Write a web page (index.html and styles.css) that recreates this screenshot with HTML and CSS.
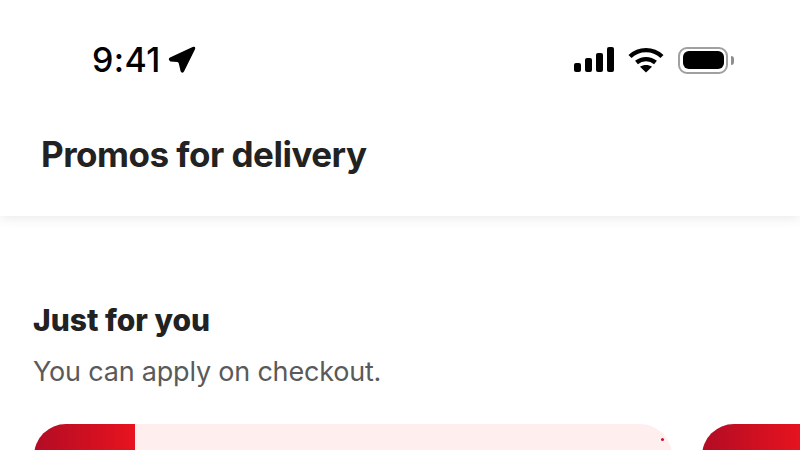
FILE: index.html
```html
<!DOCTYPE html>
<html lang="en">
<head>
    <meta charset="UTF-8">
    <title>Promos for delivery</title>
    <link rel="stylesheet" href="styles.css">
</head>
<body>
<header class="top">
    <div class="status">
        <div class="status-left">
            <span class="time">9:41</span>
            <svg class="arrow" width="28" height="28" viewBox="0 0 28 28"><path d="M2 11.6 L24.6 0.9 Q28 -0.2 27 3.2 L16 25.4 Q14 28 12.6 25.2 L10.8 17.4 Q10.5 16.2 9.4 16 L2.4 15.6 Q-0.6 13.4 2 11.6Z" fill="#000"/></svg>
        </div>
        <div class="status-right">
            <svg class="signal" width="40" height="26" viewBox="0 0 40 26">
                <rect x="0" y="16" width="7" height="9" rx="2"/>
                <rect x="11" y="11" width="7" height="14" rx="2"/>
                <rect x="22" y="6" width="7" height="19" rx="2"/>
                <rect x="33" y="0" width="7" height="25" rx="2"/>
            </svg>
            <svg class="wifi" width="36" height="26" viewBox="0 0 36 26" fill="none" stroke="#000" stroke-width="4.4">
                <path d="M2 9.5 C11 1 25 1 34 9.5"/>
                <path d="M8.5 15.5 C14 11 22 11 27.5 15.5"/>
                <path d="M18 25.5 L12 19.8 C15.5 17.3 20.5 17.3 24 19.8Z" fill="#000" stroke="none"/>
            </svg>
            <div class="battery">
                <div class="battery-shell"><div class="battery-fill"></div></div>
                <div class="battery-cap"></div>
            </div>
        </div>
    </div>
    <h1 class="title">Promos for delivery</h1>
</header>

<main class="content">
    <h2 class="section-title">Just for you</h2>
    <p class="section-sub">You can apply on checkout.</p>
    <div class="cards">
        <div class="card">
            <div class="card-side"></div>
            <div class="card-body"><span class="dot"></span></div>
        </div>
        <div class="card">
            <div class="card-side"></div>
            <div class="card-body"></div>
        </div>
    </div>
</main>
</body>
</html>
```

FILE: styles.css
```css
html, body {
    margin: 0;
    height: 100%;
    overflow: hidden;
    background: #fff;
}

body {
    font-family: Inter, "Liberation Sans", sans-serif;
    color: #222;
}

.top {
    height: 216px;
    box-sizing: border-box;
    padding-top: 38px;
    background: #fff;
    box-shadow: 0 1px 12px rgba(0, 0, 0, 0.1);
}

.status {
    display: flex;
    justify-content: space-between;
    align-items: center;
    height: 44px;
    padding: 0 66px 0 92px;
}

.status-left {
    display: flex;
    align-items: center;
    gap: 7px;
}

.time {
    font-size: 34px;
    font-weight: 500;
    line-height: 44px;
    letter-spacing: 0.4px;
    color: #000;
}

.status-right {
    display: flex;
    align-items: center;
    gap: 14px;
}

.battery {
    display: flex;
    align-items: center;
    gap: 3px;
}

.battery-shell {
    box-sizing: border-box;
    width: 50px;
    height: 27px;
    padding: 2.5px;
    border: 2.5px solid #a0a0a0;
    border-radius: 9px;
}

.battery-fill {
    height: 100%;
    background: #000;
    border-radius: 6px;
}

.battery-cap {
    width: 3px;
    height: 9px;
    background: #8e8e8e;
    border-radius: 0 4px 4px 0;
}

.title {
    margin: 50px 0 0 41px;
    font-size: 35px;
    line-height: 44px;
    font-weight: 700;
    letter-spacing: -0.5px;
}

.content {
    height: 234px;
    box-sizing: border-box;
    padding: 84px 0 0 34px;
    overflow: hidden;
}

.section-title {
    margin: 0 0 0 -1px;
    font-size: 30px;
    line-height: 40px;
    font-weight: 800;
    letter-spacing: 0;
}

.section-sub {
    margin: 12px 0 0 -1px;
    font-size: 27px;
    line-height: 40px;
    font-weight: 400;
    letter-spacing: -0.2px;
    color: #5a5a5a;
}

.cards {
    display: flex;
    gap: 30px;
    margin-top: 32px;
}

.card {
    display: flex;
    flex: none;
    width: 638px;
    height: 200px;
    border-radius: 32px;
    overflow: hidden;
}

.card-side {
    width: 101px;
    background: linear-gradient(90deg, #b20c24, #e8131f);
}

.card-body {
    position: relative;
    flex: 1;
    background: #feeeee;
}

.dot {
    position: absolute;
    top: 14px;
    right: 8px;
    width: 3px;
    height: 3px;
    border-radius: 50%;
    background: #c2103a;
}
```
